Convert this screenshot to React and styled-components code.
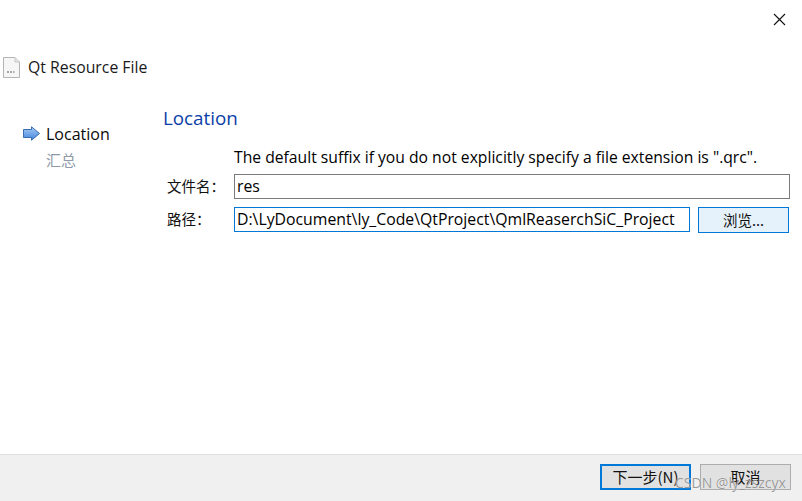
import React from "react";
import styled, { createGlobalStyle } from "styled-components";

const Global = createGlobalStyle`
  html, body { margin: 0; padding: 0; background: #fff; }
  body { font-family: "Open Sans", "Noto Sans CJK SC", sans-serif; color: #000; }
`;
const cjk = `"Noto Sans CJK SC", "Open Sans", sans-serif`;

const Dialog = styled.div`
  position: relative;
  width: 802px;
  height: 501px;
  display: flex;
  flex-direction: column;
  overflow: hidden;
  background: #fff;
`;
const TitleBar = styled.div`
  height: 38px;
  display: flex;
  justify-content: flex-end;
  align-items: flex-start;
  padding: 13px 16px 0 0;
  box-sizing: border-box;
`;
const CloseIcon = styled.svg`
  width: 13px;
  height: 13px;
  display: block;
`;
const Header = styled.div`
  height: 58px;
  display: flex;
  align-items: center;
  gap: 7px;
  padding-left: 3px;
  font-size: 15.8px;
  color: #1a1a1a;
`;
const Body = styled.div`
  flex: 1;
  display: flex;
  min-height: 0;
`;
const Steps = styled.div`
  width: 163px;
  padding: 0 0 0 23px;
  box-sizing: border-box;
  display: flex;
  flex-direction: column;
  margin-top: 25px;
`;
const Step = styled.div`
  height: 26px;
  box-sizing: border-box;
  display: flex;
  align-items: center;
  gap: 5px;
  font-size: 15px;
  font-family: ${cjk};
  color: ${(p) => (p.$active ? "#0a0a0a" : "#8f9aa6")};
  padding: 0 0 ${(p) => (p.$active ? 0 : 2)}px ${(p) => (p.$active ? 0 : 23)}px;
`;
const ActiveLabel = styled.span`
  font-family: "Open Sans", sans-serif;
  font-size: 16px;
`;
const Content = styled.div`
  flex: 1;
  padding: 9px 12px 0 0;
  display: flex;
  flex-direction: column;
`;
const PageTitle = styled.div`
  font-size: 18.8px;
  line-height: 26px;
  color: #0b3ea8;
`;
const Hint = styled.div`
  margin: 15px 0 0 71px;
  font-size: 15.7px;
  line-height: 22px;
  white-space: nowrap;
`;
const Form = styled.div`
  margin-top: 6px;
  display: grid;
  grid-template-columns: 71px 1fr;
  row-gap: 8px;
  align-items: center;
`;
const Label = styled.div`
  padding: 0 0 ${(p) => p.$lift}px 4px;
  font-family: ${cjk};
  font-size: 14.5px;
  line-height: 22px;
  color: #111;
`;
const PathRow = styled.div`
  display: flex;
  gap: 8px;
  align-items: flex-start;
`;
const Field = styled.div`
  box-sizing: border-box;
  height: 25px;
  width: ${(p) => p.$width}px;
  border: 1px solid ${(p) => (p.$focus ? "#0078d7" : "#7a7a7a")};
  padding-left: 2px;
  font-size: 15.8px;
  line-height: 22px;
  white-space: nowrap;
  overflow: hidden;
  background: #fff;
`;
const Browse = styled.div`
  box-sizing: border-box;
  width: 91px;
  height: 26px;
  border: 1px solid #0078d7;
  background: #e5f1fb;
  font-family: ${cjk};
  font-size: 14.5px;
  line-height: 23px;
  text-align: center;
  color: #111;
`;
const Footer = styled.div`
  height: 47px;
  box-sizing: border-box;
  background: #f0f0f0;
  border-top: 1px solid #dfdfdf;
  display: flex;
  justify-content: flex-end;
  align-items: flex-start;
  gap: 9px;
  padding: 9px 11px 0 0;
`;
const FooterButton = styled.div`
  box-sizing: border-box;
  width: 91px;
  height: 26px;
  border: ${(p) => (p.$primary ? "2px solid #0078d7" : "1px solid #adadad")};
  background: #e1e1e1;
  font-family: ${cjk};
  font-size: 15px;
  line-height: ${(p) => (p.$primary ? 22 : 24)}px;
  text-align: center;
  color: #111;
`;
const Watermark = styled.div`
  position: absolute;
  left: 675px;
  top: 474px;
  font-family: "Open Sans", sans-serif;
  font-size: 14px;
  line-height: 18px;
  color: rgba(120, 120, 120, 0.75);
  text-shadow: 0 0 1px rgba(255, 255, 255, 0.9);
  white-space: nowrap;
`;

const FileIcon = () => (
  <svg width="18" height="21" viewBox="0 0 18 21" style={{ display: "block" }}>
    <path d="M0.5 0.5H12L16.5 5V20.5H0.5Z" fill="#f6f6f6" stroke="#b4b4b4" />
    <path d="M12 0.5V5H16.5" fill="#e4e4e4" stroke="#c8c8c8" />
    <rect x="4" y="14" width="2" height="2" fill="#a8a8a8" />
    <rect x="7" y="14" width="2" height="2" fill="#a8a8a8" />
    <rect x="10" y="14" width="1.5" height="2" fill="#a8a8a8" />
  </svg>
);
const ArrowIcon = () => (
  <svg width="18" height="16" viewBox="0 0 18 16" style={{ display: "block" }}>
    <defs>
      <linearGradient id="arrowFill" x1="0" y1="0" x2="0" y2="1">
        <stop offset="0" stopColor="#a9cdf7" />
        <stop offset="1" stopColor="#3f83dc" />
      </linearGradient>
    </defs>
    <path d="M0.5 3.5H8.5V0.8L16.5 7.5L8.5 14.2V11.5H0.5Z" fill="url(#arrowFill)" stroke="#3a6cb0" strokeWidth="1" strokeLinejoin="round" />
  </svg>
);

export default function App() {
  return (
    <Dialog>
      <Global />
      <TitleBar>
        <CloseIcon viewBox="0 0 13 13">
          <path d="M1 1L12 12M12 1L1 12" stroke="#111" strokeWidth="1.1" fill="none" />
        </CloseIcon>
      </TitleBar>
      <Header>
        <FileIcon />
        <span>Qt Resource File</span>
      </Header>
      <Body>
        <Steps>
          <Step $active>
            <ArrowIcon />
            <ActiveLabel>Location</ActiveLabel>
          </Step>
          <Step>汇总</Step>
        </Steps>
        <Content>
          <PageTitle>Location</PageTitle>
          <Hint>The default suffix if you do not explicitly specify a file extension is ".qrc".</Hint>
          <Form>
            <Label $lift={2}>文件名：</Label>
            <Field $width={556}>res</Field>
            <Label $lift={3}>路径：</Label>
            <PathRow>
              <Field $width={456} $focus>D:\LyDocument\ly_Code\QtProject\QmlReaserchSiC_Project</Field>
              <Browse>浏览...</Browse>
            </PathRow>
          </Form>
        </Content>
      </Body>
      <Footer>
        <FooterButton $primary>下一步(N)</FooterButton>
        <FooterButton>取消</FooterButton>
      </Footer>
      <Watermark>CSDN @ly_zszcyx</Watermark>
    </Dialog>
  );
}
